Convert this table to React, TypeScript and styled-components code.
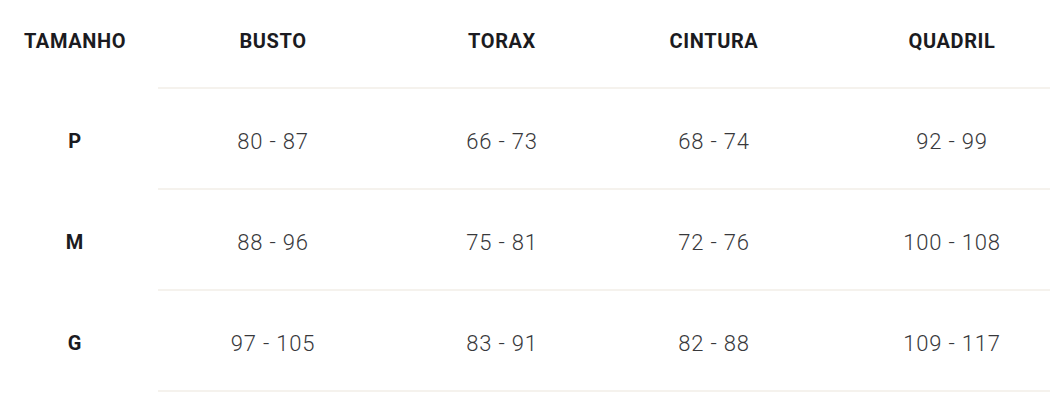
import React from 'react';
import styled, { createGlobalStyle } from 'styled-components';

type SizeRow = {
    size: string,
    values: string[]
};

const headers = ['BUSTO', 'TORAX', 'CINTURA', 'QUADRIL'];

const rows: SizeRow[] = [
    { size: 'P', values: ['80 - 87', '66 - 73', '68 - 74', '92 - 99'] },
    { size: 'M', values: ['88 - 96', '75 - 81', '72 - 76', '100 - 108'] },
    { size: 'G', values: ['97 - 105', '83 - 91', '82 - 88', '109 - 117'] },
];

const GlobalStyle = createGlobalStyle`
    html, body {
        margin: 0;
        padding: 0;
        background: #ffffff;
    }

    body {
        font-family: Roboto, "Liberation Sans", sans-serif;
        -webkit-font-smoothing: antialiased;
    }
`;

const Table = styled.div`
    width: 1050px;
    display: flex;
    flex-direction: column;
`;

const Row = styled.div<{ $head?: boolean }>`
    display: grid;
    grid-template-columns: 158px 230px 228px 196px 238px;
    height: ${p => (p.$head ? '87px' : '99px')};
    align-items: center;
    padding: ${p => (p.$head ? '0 0 6px' : '5px 0 0')};
    box-sizing: border-box;
`;

const Cell = styled.div<{ $last?: boolean, $first?: boolean, $head?: boolean }>`
    text-align: center;
    padding-left: ${p => (p.$last ? '42px' : '0')};
    padding-right: ${p => (p.$first ? '8px' : '0')};
    font-size: ${p => (p.$head ? '20px' : '22px')};
    font-weight: ${p => (p.$head ? 700 : 300)};
    letter-spacing: ${p => (p.$head ? '0.6px' : '0.8px')};
    color: ${p => (p.$head ? '#1b1b21' : '#38383b')};
    white-space: nowrap;
`;

const SizeLabel = styled(Cell)`
    font-size: 20px;
    font-weight: 700;
    color: #1b1b21;
`;

const Rule = styled.div`
    margin-left: 158px;
    height: 2px;
    background: #f5f2ed;
`;

export default function App() {
    return (
        <>
            <GlobalStyle />
            <Table>
                <Row $head>
                    <Cell $head $first>TAMANHO</Cell>
                    {headers.map((h, i) => (
                        <Cell key={h} $head $last={i === headers.length - 1}>{h}</Cell>
                    ))}
                </Row>
                <Rule />
                {rows.map(r => (
                    <React.Fragment key={r.size}>
                        <Row>
                            <SizeLabel $first>{r.size}</SizeLabel>
                            {r.values.map((v, i) => (
                                <Cell key={i} $last={i === r.values.length - 1}>{v}</Cell>
                            ))}
                        </Row>
                        <Rule />
                    </React.Fragment>
                ))}
            </Table>
        </>
    );
}
